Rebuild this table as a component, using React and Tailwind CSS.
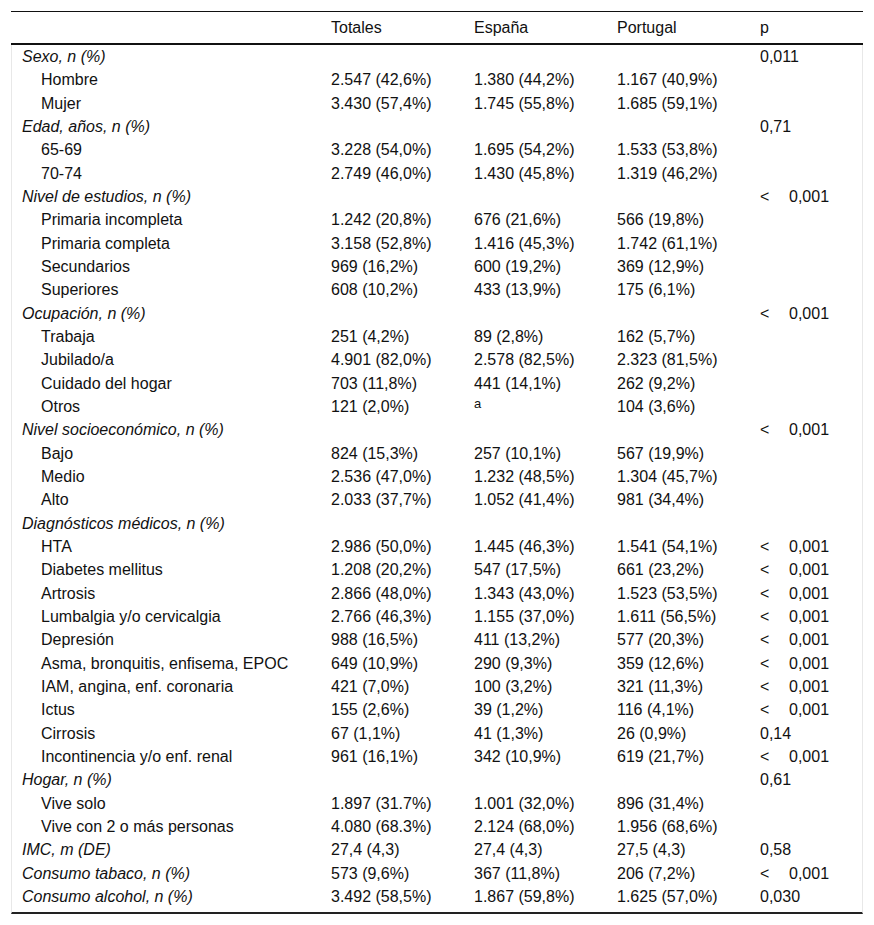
const rows = [
  { g: 'Sexo, n (%)', p: '0,011' },
  { l: 'Hombre', v: ['2.547 (42,6%)', '1.380 (44,2%)', '1.167 (40,9%)'] },
  { l: 'Mujer', v: ['3.430 (57,4%)', '1.745 (55,8%)', '1.685 (59,1%)'] },
  { g: 'Edad, años, n (%)', p: '0,71' },
  { l: '65-69', v: ['3.228 (54,0%)', '1.695 (54,2%)', '1.533 (53,8%)'] },
  { l: '70-74', v: ['2.749 (46,0%)', '1.430 (45,8%)', '1.319 (46,2%)'] },
  { g: 'Nivel de estudios, n (%)', lt: true },
  { l: 'Primaria incompleta', v: ['1.242 (20,8%)', '676 (21,6%)', '566 (19,8%)'] },
  { l: 'Primaria completa', v: ['3.158 (52,8%)', '1.416 (45,3%)', '1.742 (61,1%)'] },
  { l: 'Secundarios', v: ['969 (16,2%)', '600 (19,2%)', '369 (12,9%)'] },
  { l: 'Superiores', v: ['608 (10,2%)', '433 (13,9%)', '175 (6,1%)'] },
  { g: 'Ocupación, n (%)', lt: true },
  { l: 'Trabaja', v: ['251 (4,2%)', '89 (2,8%)', '162 (5,7%)'] },
  { l: 'Jubilado/a', v: ['4.901 (82,0%)', '2.578 (82,5%)', '2.323 (81,5%)'] },
  { l: 'Cuidado del hogar', v: ['703 (11,8%)', '441 (14,1%)', '262 (9,2%)'] },
  { l: 'Otros', v: ['121 (2,0%)', null, '104 (3,6%)'] },
  { g: 'Nivel socioeconómico, n (%)', lt: true },
  { l: 'Bajo', v: ['824 (15,3%)', '257 (10,1%)', '567 (19,9%)'] },
  { l: 'Medio', v: ['2.536 (47,0%)', '1.232 (48,5%)', '1.304 (45,7%)'] },
  { l: 'Alto', v: ['2.033 (37,7%)', '1.052 (41,4%)', '981 (34,4%)'] },
  { g: 'Diagnósticos médicos, n (%)' },
  { l: 'HTA', v: ['2.986 (50,0%)', '1.445 (46,3%)', '1.541 (54,1%)'], lt: true },
  { l: 'Diabetes mellitus', v: ['1.208 (20,2%)', '547 (17,5%)', '661 (23,2%)'], lt: true },
  { l: 'Artrosis', v: ['2.866 (48,0%)', '1.343 (43,0%)', '1.523 (53,5%)'], lt: true },
  { l: 'Lumbalgia y/o cervicalgia', v: ['2.766 (46,3%)', '1.155 (37,0%)', '1.611 (56,5%)'], lt: true },
  { l: 'Depresión', v: ['988 (16,5%)', '411 (13,2%)', '577 (20,3%)'], lt: true },
  { l: 'Asma, bronquitis, enfisema, EPOC', v: ['649 (10,9%)', '290 (9,3%)', '359 (12,6%)'], lt: true },
  { l: 'IAM, angina, enf. coronaria', v: ['421 (7,0%)', '100 (3,2%)', '321 (11,3%)'], lt: true },
  { l: 'Ictus', v: ['155 (2,6%)', '39 (1,2%)', '116 (4,1%)'], lt: true },
  { l: 'Cirrosis', v: ['67 (1,1%)', '41 (1,3%)', '26 (0,9%)'], p: '0,14' },
  { l: 'Incontinencia y/o enf. renal', v: ['961 (16,1%)', '342 (10,9%)', '619 (21,7%)'], lt: true },
  { g: 'Hogar, n (%)', p: '0,61' },
  { l: 'Vive solo', v: ['1.897 (31.7%)', '1.001 (32,0%)', '896 (31,4%)'] },
  { l: 'Vive con 2 o más personas', v: ['4.080 (68.3%)', '2.124 (68,0%)', '1.956 (68,6%)'] },
  { g: 'IMC, m (DE)', v: ['27,4 (4,3)', '27,4 (4,3)', '27,5 (4,3)'], p: '0,58' },
  { g: 'Consumo tabaco, n (%)', v: ['573 (9,6%)', '367 (11,8%)', '206 (7,2%)'], lt: true },
  { g: 'Consumo alcohol, n (%)', v: ['3.492 (58,5%)', '1.867 (59,8%)', '1.625 (57,0%)'], p: '0,030' },
];

const PCell = ({ r }) => {
  if (r.lt) {
    return (
      <div className="w-[112px] pl-[10px] flex">
        <span className="w-[29px]">&lt;</span>
        <span>0,001</span>
      </div>
    );
  }
  return <div className="w-[112px] pl-[10px]">{r.p || ''}</div>;
};

export default function App() {
  return (
    <div className="min-h-screen bg-white text-[#111] text-[16px] leading-[19px] font-['Liberation_Sans',Arial,sans-serif]">
      <div className="pt-[11px] pl-[11px]">
        <div className="w-[852px] border-t border-[#111]">
          {/* header */}
          <div className="flex items-center h-[33px] pb-[1px] border-b-2 border-[#111]">
            <div className="w-[310px]" />
            <div className="w-[143px] pl-[10px]">Totales</div>
            <div className="w-[143px] pl-[10px]">España</div>
            <div className="w-[143px] pl-[10px]">Portugal</div>
            <div className="w-[113px] pl-[10px]">p</div>
          </div>

          <div className="border-x border-[#e8e8e8] pb-[4px] border-b-2 border-b-[#222]">
            {rows.map((r, i) => (
              <div key={i} className="flex items-center h-[23.33px]">
                <div className={`w-[309px] ${r.g ? 'pl-[10px] italic' : 'pl-[29px]'}`}>{r.g || r.l}</div>
                {[0, 1, 2].map((k) => (
                  <div key={k} className="w-[143px] pl-[10px] whitespace-nowrap">
                    {r.v ? (
                      r.v[k] === null ? (
                        <span className="relative top-[-4px] text-[13px]">a</span>
                      ) : (
                        r.v[k]
                      )
                    ) : ''}
                  </div>
                ))}
                <PCell r={r} />
              </div>
            ))}
          </div>
        </div>
      </div>
    </div>
  );
}
